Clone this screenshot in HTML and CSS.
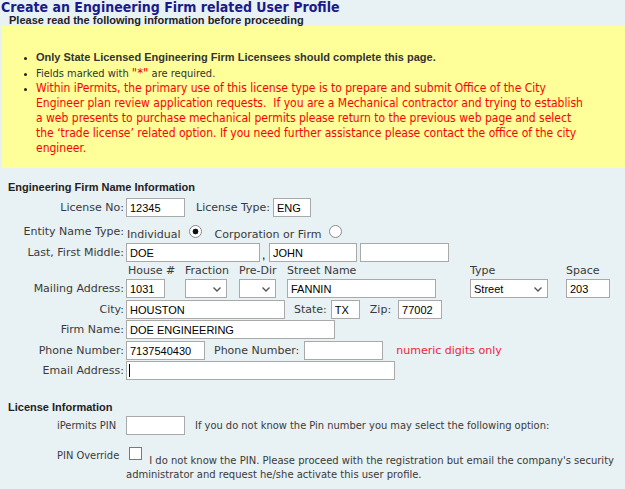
FILE: index.html
```html
<!DOCTYPE html>
<html lang="en">
<head>
  <meta charset="UTF-8" />
  <title>Create an Engineering Firm related User Profile</title>
  <link rel="stylesheet" href="styles.css">
</head>
<body>

  <h1 class="page-title">Create an Engineering Firm related User Profile</h1>
  <div class="notice-head">Please read the following information before proceeding</div>
  <div class="notice">
    <ul>
      <li class="strong">Only State Licensed Engineering Firm Licensees should complete this page.</li>
      <li>Fields marked with <span class="req">"*"</span> are required.</li>
      <li class="warn">Within iPermits, the primary use of this license type is to prepare and submit Office of the City<br>Engineer plan review application requests.&nbsp; If you are a Mechanical contractor and trying to establish<br>a web presents to purchase mechanical permits please return to the previous web page and select<br>the ‘trade license’ related option. If you need further assistance please contact the office of the city<br>engineer.</li>
    </ul>
  </div>

  <div class="section">
    <div class="section-title">Engineering Firm Name Information</div>

    <div class="row">
      <label class="lbl">License No:</label>
      <input class="txt w59" value="12345" />
      <label class="inl ml11">License Type:</label>
      <input class="txt w38 ml3" value="ENG" />
    </div>

    <div class="row entity">
      <label class="lbl">Entity Name Type:</label>
      <span class="opt ml1">Individual</span>
      <input type="radio" name="entity" class="radio ml8" checked />
      <span class="opt ml13">Corporation or Firm</span>
      <input type="radio" name="entity" class="radio ml8" />
    </div>

    <div class="row">
      <label class="lbl">Last, First Middle:</label>
      <input class="txt w134" value="DOE" />
      <span class="comma">,</span>
      <input class="txt w88" value="JOHN" />
      <input class="txt w89 ml3" value="" />
    </div>

    <div class="addr">
      <span></span>
      <span class="col-head ml2">House #</span>
      <span class="col-head">Fraction</span>
      <span class="col-head">Pre-Dir</span>
      <span class="col-head">Street Name</span>
      <span class="col-head">Type</span>
      <span class="col-head">Space</span>

      <label class="lbl">Mailing Address:</label>
      <input class="txt w39" value="1031" />
      <span class="sel w42">
        <select><option></option></select>
        <svg width="8" height="5" viewBox="0 0 8 5"><path d="M0.5 0.5 L4 4 L7.5 0.5" fill="none" stroke="#555" stroke-width="1.4"/></svg>
      </span>
      <span class="sel w37">
        <select><option></option></select>
        <svg width="8" height="5" viewBox="0 0 8 5"><path d="M0.5 0.5 L4 4 L7.5 0.5" fill="none" stroke="#555" stroke-width="1.4"/></svg>
      </span>
      <input class="txt w149" value="FANNIN" />
      <span class="sel w78">
        <select><option>Street</option></select>
        <svg width="8" height="5" viewBox="0 0 8 5"><path d="M0.5 0.5 L4 4 L7.5 0.5" fill="none" stroke="#555" stroke-width="1.4"/></svg>
      </span>
      <input class="txt w44" value="203" />
    </div>

    <div class="row">
      <label class="lbl">City:</label>
      <input class="txt w159" value="HOUSTON" />
      <label class="inl ml9">State:</label>
      <input class="txt w29 ml4" value="TX" />
      <label class="inl ml10">Zip:</label>
      <input class="txt w44 ml7" value="77002" />
    </div>

    <div class="row tight">
      <label class="lbl">Firm Name:</label>
      <input class="txt w209" value="DOE ENGINEERING" />
    </div>

    <div class="row">
      <label class="lbl">Phone Number:</label>
      <input class="txt w79" value="7137540430" />
      <label class="inl ml9">Phone Number:</label>
      <input class="txt w79 ml5" value="" />
      <span class="hint">numeric digits only</span>
    </div>

    <div class="row tight">
      <label class="lbl">Email Address:</label>
      <span class="email">
        <input class="txt w269" value="" />
        <span class="caret"></span>
      </span>
    </div>
  </div>

  <div class="section lic">
    <div class="section-title">License Information</div>

    <div class="row pin">
      <label class="lbl-left">iPermits PIN</label>
      <input class="txt w59" value="" />
      <span class="pin-note">If you do not know the Pin number you may select the following option:</span>
    </div>

    <div class="row override">
      <label class="lbl-left">PIN Override</label>
      <p class="override-text"><input type="checkbox" class="check" /> I do not know the PIN. Please proceed with the registration but email the company's security administrator and request he/she activate this user profile.</p>
    </div>
  </div>

</body>
</html>
```

FILE: styles.css
```css
:root {
  --tahoma: "DejaVu Sans Condensed", "Liberation Sans", sans-serif;
  --tahoma-bold: "Liberation Sans", Arial, sans-serif;
  --verdana: "DejaVu Sans", Verdana, sans-serif;
  --arial: "Liberation Sans", Arial, sans-serif;
  --page: #e8f1f3;
  --line: #a9a9a9;
}

* { box-sizing: border-box; }

body {
  margin: 0;
  background: var(--page);
  color: #3a3a3a;
  font-family: var(--verdana);
  font-size: 11px;
}

.page-title {
  margin: 0;
  padding-left: 1px;
  font: bold 14px/15px var(--tahoma);
  color: #1a1a8c;
}

.notice-head {
  padding-left: 9px;
  font: bold 11px/11px var(--tahoma-bold);
  color: #222;
}

.notice {
  margin-left: 2px;
  padding: 24px 0 12px;
  background: #ffff99;
}

.notice ul {
  margin: 0;
  padding: 0 4px 0 34px;
}

.notice li {
  font: 11px/15px var(--tahoma);
  color: #333;
}

.notice li::marker { color: #222; font-size: 9px; }

.notice li.strong {
  font-family: var(--tahoma-bold);
  font-weight: bold;
}

.req {
  color: #e00;
  font-size: 13px;
}

.notice li.warn {
  font-size: 12px;
  color: #f00;
  white-space: nowrap;
}

/* form sections */

.section { padding-top: 14px; }

.section.lic { padding-top: 22px; }

.section-title {
  padding-left: 8px;
  margin-bottom: 5px;
  font: bold 11px/11px var(--tahoma-bold);
  color: #222;
}

.section.lic .section-title { margin-bottom: 3px; }

.row {
  display: flex;
  align-items: center;
  height: 19px;
  margin-top: 2px;
}

.row.tight { margin-top: 1px; }

.section-title + .row { margin-top: 0; }

.row.entity {
  height: 20px;
  margin-top: 4px;
}

.lbl {
  flex: none;
  width: 126px;
  padding-right: 2px;
  text-align: right;
  white-space: nowrap;
}

.lbl-left {
  flex: none;
  width: 126px;
  padding-left: 57px;
  font-family: var(--tahoma);
  white-space: nowrap;
}

.inl { white-space: nowrap; }

.txt {
  flex: none;
  height: 19px;
  margin: 0;
  padding: 0 3px;
  border: 1px solid var(--line);
  background: #fff;
  font: 11px var(--arial);
  color: #000;
}

.opt { margin-top: 6px; }

.radio {
  appearance: none;
  flex: none;
  width: 13px;
  height: 13px;
  margin: 0;
  border: 1px solid #8a8a8a;
  border-radius: 50%;
  background: #fff;
}

.radio:checked {
  background: radial-gradient(circle, #111 0 2.6px, #fff 3.2px);
}

.comma {
  width: 9px;
  padding-left: 2px;
  align-self: flex-end;
  font-family: var(--arial);
  font-size: 12px;
  color: #000;
}

/* address grid */

.addr {
  display: grid;
  grid-template-columns: 126px 59px 54px 48px 183px 96px auto;
  grid-template-rows: 17px 19px;
  align-items: center;
}

.col-head { white-space: nowrap; }

.sel {
  position: relative;
  display: block;
  height: 19px;
}

.sel select {
  appearance: none;
  width: 100%;
  height: 19px;
  margin: 0;
  padding: 0 0 0 3px;
  border: 1px solid var(--line);
  border-radius: 0;
  background: #fff;
  font: 11px var(--arial);
  color: #000;
}

.sel svg {
  position: absolute;
  right: 6px;
  top: 8px;
  pointer-events: none;
}

.hint {
  margin-left: 13px;
  color: #f0243c;
  white-space: nowrap;
}

.email { position: relative; display: block; height: 19px; }

.caret {
  position: absolute;
  left: 3px;
  top: 3px;
  width: 1px;
  height: 13px;
  background: #000;
}

/* license block */

.row.pin { margin-top: 0; }

.pin-note {
  margin-left: 10px;
  font-family: var(--tahoma);
  white-space: nowrap;
}

.row.override {
  align-items: flex-start;
  height: auto;
  margin-top: 12px;
}

.row.override .lbl-left {
  padding-top: 2px;
  line-height: 13px;
}

.override-text {
  flex: 1;
  margin: 0;
  padding-right: 4px;
  font-size: 10px;
  line-height: 14px;
}

.check {
  appearance: none;
  width: 13px;
  height: 13px;
  margin: 0 4px 0 3px;
  vertical-align: 4px;
  border: 1px solid #7a7a7a;
  background: #fff;
}

.ml1 { margin-left: 1px; }
.ml2 { margin-left: 2px; }
.ml3 { margin-left: 3px; }
.ml4 { margin-left: 4px; }
.ml5 { margin-left: 5px; }
.ml7 { margin-left: 7px; }
.ml8 { margin-left: 8px; }
.ml9 { margin-left: 9px; }
.ml10 { margin-left: 10px; }
.ml11 { margin-left: 11px; }
.ml13 { margin-left: 13px; }

.w29 { width: 29px; }
.w37 { width: 37px; }
.w38 { width: 38px; }
.w39 { width: 39px; }
.w42 { width: 42px; }
.w44 { width: 44px; }
.w59 { width: 59px; }
.w78 { width: 78px; }
.w79 { width: 79px; }
.w88 { width: 88px; }
.w89 { width: 89px; }
.w134 { width: 134px; }
.w149 { width: 149px; }
.w159 { width: 159px; }
.w209 { width: 209px; }
.w269 { width: 269px; }
```
